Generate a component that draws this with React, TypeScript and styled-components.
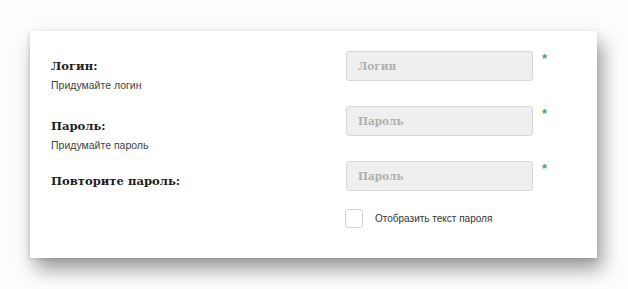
import React from 'react'
import styled, { createGlobalStyle } from 'styled-components'

const GlobalStyle = createGlobalStyle`
  html, body {
    margin: 0;
    padding: 0;
    background: #fdfdfd;
  }
  * {
    box-sizing: border-box;
  }
`

interface FieldProps {
  label: string
  hint?: string
  placeholder: string
  type?: string
  offset: number
  last?: boolean
}

const Field = ({ label, hint, placeholder, type, offset, last }: FieldProps): React.ReactElement => (
  <Row $last={last}>
    <LabelBlock $offset={offset}>
      <Label>{label}</Label>
      {hint && <Hint>{hint}</Hint>}
    </LabelBlock>
    <Input type={type || 'text'} placeholder={placeholder} />
    <Required>*</Required>
  </Row>
)

const App = (): React.ReactElement => (
  <Page>
    <GlobalStyle />
    <Card>
      <Field label="Логин:" hint="Придумайте логин" placeholder="Логин" offset={8} />
      <Field label="Пароль:" hint="Придумайте пароль" placeholder="Пароль" type="password" offset={13} />
      <Field label="Повторите пароль:" placeholder="Пароль" type="password" offset={13} last />
      <CheckRow>
        <Checkbox type="checkbox" />
        <CheckLabel>Отобразить текст пароля</CheckLabel>
      </CheckRow>
    </Card>
  </Page>
)

export default App

const Page = styled.div`
  padding: 31px 0 0 30px;
  height: 289px;
`
const Card = styled.div`
  width: 567px;
  height: 227px;
  padding: 20px 0 0 21px;
  background: #fff;
  display: flex;
  flex-direction: column;
  box-shadow: 5px 11px 18px rgba(0, 0, 0, 0.4), -1px 1px 4px rgba(0, 0, 0, 0.12);
`
const Row = styled.div<{ $last?: boolean }>`
  display: grid;
  grid-template-columns: 295px 187px auto;
  align-items: start;
  height: ${p => (p.$last ? 48 : 55)}px;
`
const LabelBlock = styled.div<{ $offset: number }>`
  padding-top: ${p => p.$offset}px;
  display: flex;
  flex-direction: column;
`
const Label = styled.span`
  font-family: "DejaVu Serif", serif;
  font-weight: bold;
  font-size: 11.6px;
  line-height: 14px;
  color: #1e1e1e;
`
const Hint = styled.span`
  margin-top: 6px;
  font-family: "Liberation Sans", Arial, sans-serif;
  font-size: 10.5px;
  line-height: 13px;
  color: #444;
`
const Input = styled.input`
  width: 187px;
  height: 30px;
  padding: 0 0 0 11px;
  background: #efefef;
  border: 1px solid #d7d7d7;
  border-radius: 3px;
  outline: none;
  font-family: "DejaVu Serif", serif;
  font-weight: bold;
  font-size: 10.5px;
  color: #333;
  &::placeholder {
    color: #b0b0b0;
  }
`
const Required = styled.span`
  margin: 1px 0 0 9px;
  font-family: "Liberation Sans", Arial, sans-serif;
  font-weight: bold;
  font-size: 13px;
  line-height: 13px;
  color: #5c9e5c;
`
const CheckRow = styled.label`
  display: flex;
  align-items: center;
  padding-left: 294px;
`
const Checkbox = styled.input`
  appearance: none;
  margin: 0;
  width: 18px;
  height: 19px;
  background: #fff;
  border: 1px solid #d2d2d2;
  border-radius: 3px;
`
const CheckLabel = styled.span`
  margin-left: 12px;
  font-family: "Liberation Sans", Arial, sans-serif;
  font-size: 10px;
  color: #333;
`
